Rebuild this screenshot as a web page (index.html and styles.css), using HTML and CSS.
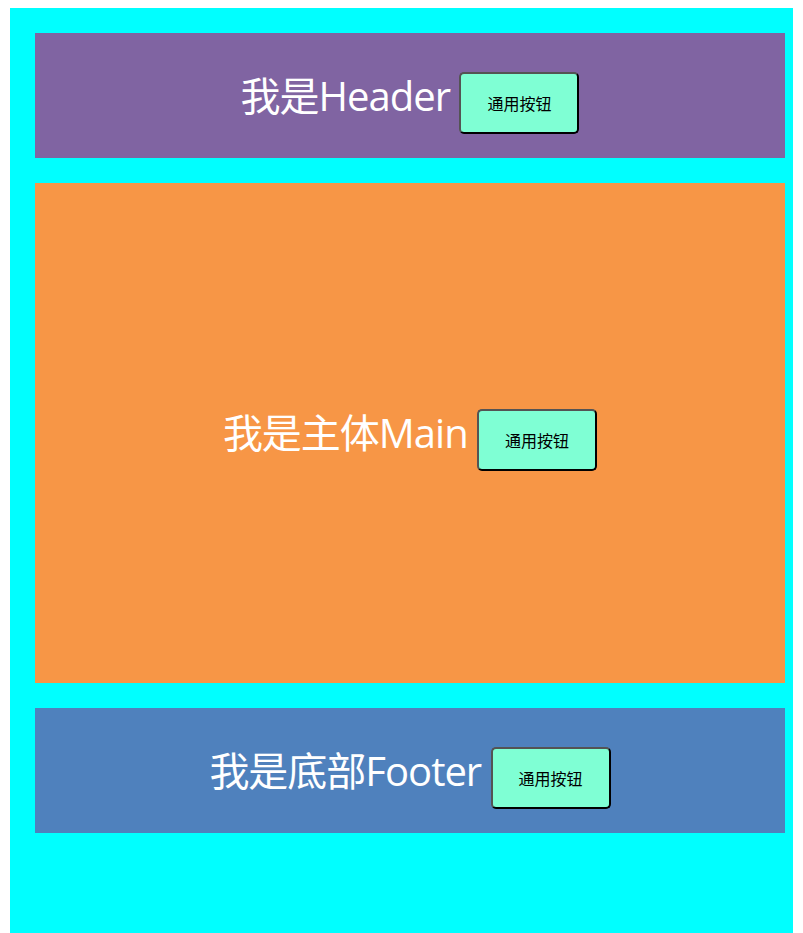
FILE: index.html
```html
<!DOCTYPE html>
<html lang="zh-CN">
<head>
    <meta charset="UTF-8">
    <meta name="viewport" content="width=device-width, initial-scale=1.0">
    <title>布局</title>
    <link rel="stylesheet" href="styles.css">
</head>
<body>
    <div class="container">
        <header class="bloco header">
            我是Header <button class="btn">通用按钮</button>
        </header>
        <main class="bloco main">
            我是主体Main <button class="btn">通用按钮</button>
        </main>
        <footer class="bloco footer">
            我是底部Footer <button class="btn">通用按钮</button>
        </footer>
    </div>
</body>
</html>
```

FILE: styles.css
```css
body {
    margin: 8px 10px;
    font-family: "Open Sans", "Noto Sans CJK SC", sans-serif;
}
.container {
    width: 800px;
    min-height: 100vh;
    box-sizing: border-box;
    padding: 25px;
    background-color: #00ffff;
}
.bloco {
    display: block;
    height: 125px;
    line-height: 125px;
    margin-bottom: 25px;
    text-align: center;
    color: #fff;
    font-size: 40px;
    letter-spacing: -1px;
}
.header {
    background-color: #8064a2;
}
.main {
    height: 500px;
    line-height: 500px;
    background-color: #f79646;
}
.footer {
    background-color: #4f81bd;
}
.btn {
    width: 120px;
    height: 62px;
    margin-top: -2px;
    line-height: normal;
    letter-spacing: normal;
    background-color: #7fffd4;
    color: #000;
    font-family: "Noto Sans CJK SC", sans-serif;
    font-size: 16px;
    border: 2px outset #000;
    border-radius: 5px;
    cursor: pointer;
    vertical-align: 1px;
}
```
